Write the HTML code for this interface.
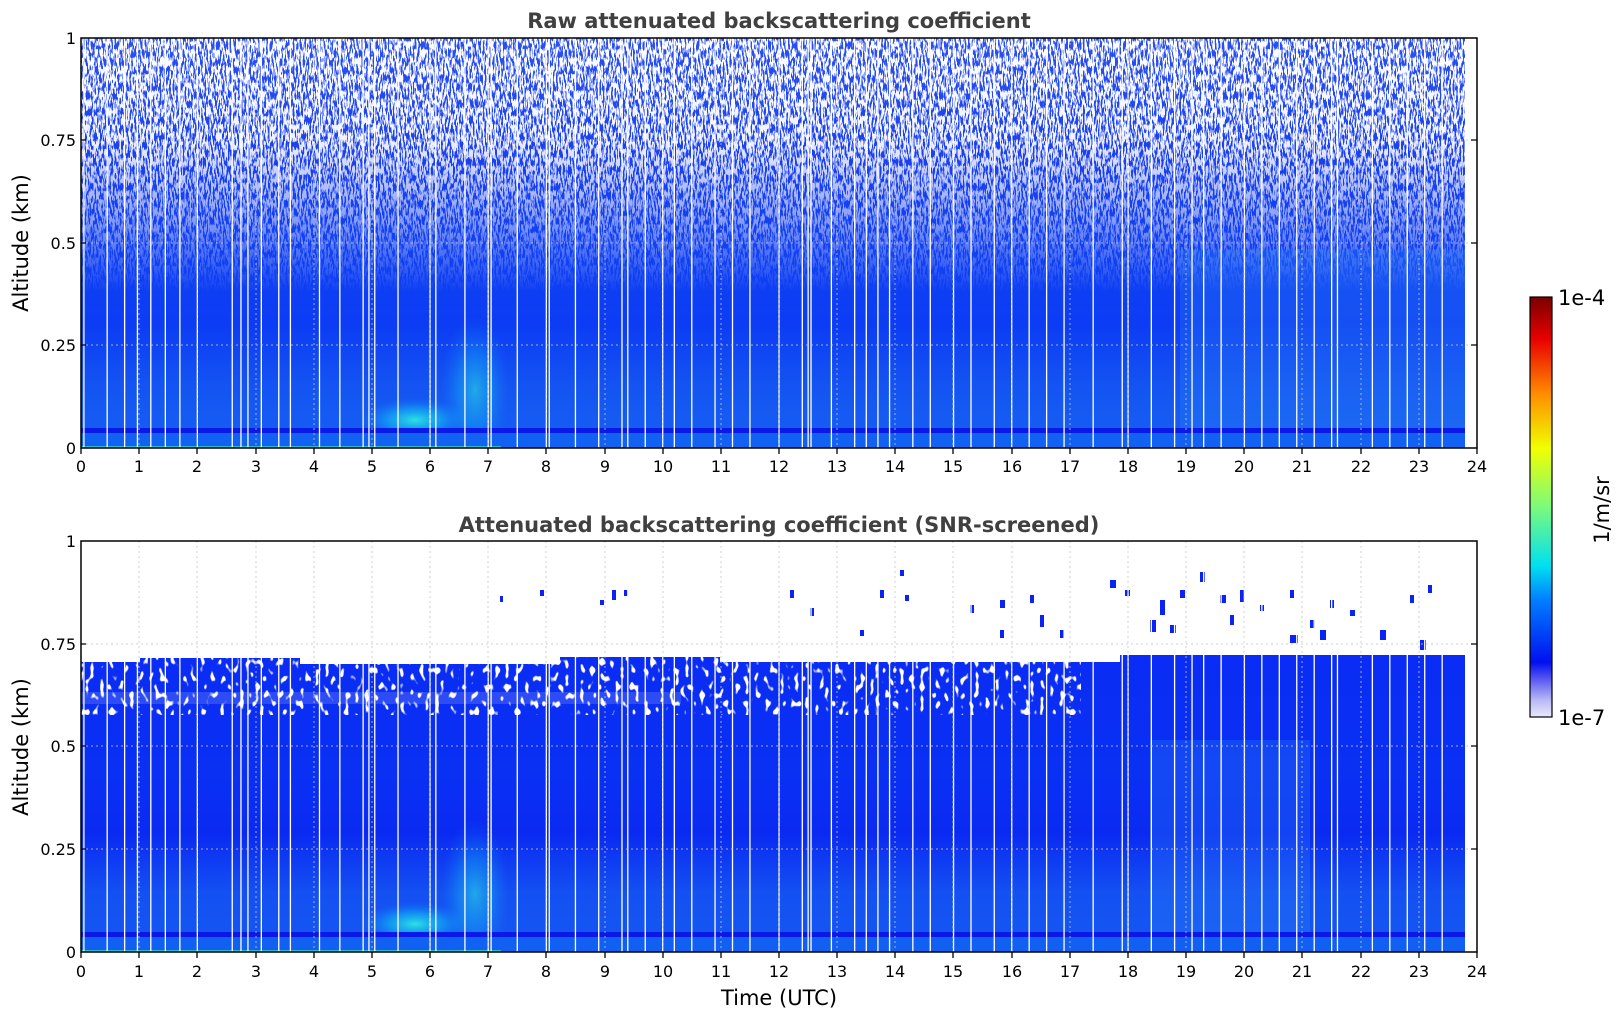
<!DOCTYPE html>
<html><head><meta charset="utf-8"><style>
html,body{margin:0;padding:0;background:#fff;}
svg{display:block;}
text{font-family:"DejaVu Sans","Liberation Sans",sans-serif;}
</style></head><body>
<svg width="1621" height="1020" viewBox="0 0 1621 1020" xmlns="http://www.w3.org/2000/svg">
<defs>
<clipPath id="c1"><rect x="81" y="38" width="1384" height="410"/></clipPath>
<clipPath id="c2"><rect x="81" y="541" width="1384" height="411"/></clipPath>
<linearGradient id="gTop" x1="0" y1="0" x2="0" y2="1">
<stop offset="0" stop-color="#2a50f0"/>
<stop offset="0.3" stop-color="#1a40f0"/>
<stop offset="0.55" stop-color="#1040f2"/>
<stop offset="0.7" stop-color="#0c3cf4"/>
<stop offset="0.85" stop-color="#1454f2"/>
<stop offset="1" stop-color="#1660f2"/>
</linearGradient>
<linearGradient id="gBot" x1="0" y1="0" x2="0" y2="1">
<stop offset="0" stop-color="#0a2cf4"/>
<stop offset="0.4" stop-color="#0a30f4"/>
<stop offset="0.6" stop-color="#0a2af2"/>
<stop offset="0.8" stop-color="#1450f2"/>
<stop offset="1" stop-color="#1458f2"/>
</linearGradient>
<linearGradient id="mTop" x1="0" y1="0" x2="0" y2="1">
<stop offset="0" stop-color="#fff"/>
<stop offset="0.25" stop-color="#eee"/>
<stop offset="0.45" stop-color="#777"/>
<stop offset="0.62" stop-color="#000"/>
</linearGradient>
<mask id="mk"><rect x="81" y="38" width="1384" height="410" fill="url(#mTop)"/></mask>
<filter id="nz" x="0" y="0" width="100%" height="100%">
<feTurbulence type="fractalNoise" baseFrequency="0.6 0.12" numOctaves="2" seed="7"/>
<feColorMatrix type="matrix" values="0 0 0 0 1  0 0 0 0 1  0 0 0 0 1  14 0 0 0 -6.3"/>
</filter>
<filter id="nz2" x="0" y="0" width="100%" height="100%">
<feTurbulence type="fractalNoise" baseFrequency="0.2 0.12" numOctaves="1" seed="3"/>
<feColorMatrix type="matrix" values="0 0 0 0 1  0 0 0 0 1  0 0 0 0 1  12 0 0 0 -7"/>
</filter>
<radialGradient id="cy" cx="0.5" cy="0.5" r="0.5">
<stop offset="0" stop-color="#2ef0e0" stop-opacity="0.9"/>
<stop offset="0.5" stop-color="#12c0f4" stop-opacity="0.55"/>
<stop offset="1" stop-color="#1080f4" stop-opacity="0"/>
</radialGradient>
<linearGradient id="jet" x1="0" y1="1" x2="0" y2="0">
<stop offset="0" stop-color="#eaeafb"/>
<stop offset="0.04" stop-color="#b8b8f6"/>
<stop offset="0.09" stop-color="#5858f2"/>
<stop offset="0.13" stop-color="#0010f0"/>
<stop offset="0.28" stop-color="#0080ff"/>
<stop offset="0.36" stop-color="#00e0f0"/>
<stop offset="0.5" stop-color="#7cfa7c"/>
<stop offset="0.64" stop-color="#f0ff00"/>
<stop offset="0.77" stop-color="#ff8c00"/>
<stop offset="0.9" stop-color="#e80000"/>
<stop offset="1" stop-color="#7a0000"/>
</linearGradient>
<g id="vlines">
<path transform="translate(81,0) scale(58.17,1)" vector-effect="non-scaling-stroke" stroke="#fff" stroke-width="1.3" fill="none"
d="M.05 0V1M.45 0V1M.75 0V1M.97 0V1M1.2 0V1M1.45 0V1M1.7 0V1M2 0V1M2.6 0V1M2.75 0V1M2.87 0V1M3.1 0V1M3.4 0V1M3.6 0V1M4.1 0V1M4.45 0V1M4.85 0V1M4.95 0V1M5.05 0V1M5.45 0V1M6 0V1M6.1 0V1M6.6 0V1M7 0V1M7.05 0V1M7.5 0V1M8 0V1M8.05 0V1M8.5 0V1M8.9 0V1M9.3 0V1M9.4 0V1M9.7 0V1M10 0V1M10.2 0V1M10.5 0V1M10.9 0V1M11.2 0V1M11.5 0V1M12 0V1M12.4 0V1M12.5 0V1M12.55 0V1M12.9 0V1M13.3 0V1M13.5 0V1M13.7 0V1M13.9 0V1M14.3 0V1M14.6 0V1M15 0V1M15.3 0V1M15.7 0V1M16 0V1M16.3 0V1M16.6 0V1M16.9 0V1M17.4 0V1M17.9 0V1M18 0V1M18.4 0V1M18.8 0V1M19.1 0V1M19.3 0V1M19.6 0V1M20 0V1M20.3 0V1M20.6 0V1M20.9 0V1M21.2 0V1M21.5 0V1M21.6 0V1M22.2 0V1M22.5 0V1M22.8 0V1M23.1 0V1M23.4 0V1"/>
</g>
</defs>

<!-- TOP PANEL -->
<g clip-path="url(#c1)">
<rect x="81" y="38" width="1384" height="410" fill="url(#gTop)"/>
<rect x="81" y="38" width="1384" height="410" filter="url(#nz)" mask="url(#mk)"/>
<rect x="1180" y="250" width="285" height="180" fill="#2a80f4" opacity="0.3"/>
<ellipse cx="415" cy="420" rx="55" ry="22" fill="url(#cy)"/>
<ellipse cx="475" cy="390" rx="35" ry="75" fill="url(#cy)" opacity="0.6"/>
<rect x="81" y="428" width="1384" height="5" fill="#0a18e8"/>
<rect x="81" y="433" width="1384" height="15" fill="#1062f2" opacity="0.85"/>
<rect x="81" y="446" width="420" height="2" fill="#30e0c0" opacity="0.7"/>
<g transform="translate(0,38) scale(1,410)"><use href="#vlines"/></g>
</g>

<!-- BOTTOM PANEL -->
<g clip-path="url(#c2)">
<path d="M81 662 H140 V658 H300 V664 H560 V657 H720 V662 H1120 V655 H1465 V952 H81Z" fill="url(#gBot)"/>
<rect x="81" y="655" width="1000" height="60" filter="url(#nz2)"/>
<rect x="81" y="692" width="600" height="12" fill="#fff" opacity="0.15"/>
<rect x="1150" y="740" width="160" height="200" fill="#2a80f4" opacity="0.3"/>
<ellipse cx="415" cy="924" rx="55" ry="22" fill="url(#cy)"/>
<ellipse cx="475" cy="894" rx="35" ry="75" fill="url(#cy)" opacity="0.6"/>
<rect x="81" y="932" width="1384" height="5" fill="#0a18e8"/>
<rect x="81" y="937" width="1384" height="15" fill="#1062f2" opacity="0.85"/>
<rect x="81" y="950" width="420" height="2" fill="#30e0c0" opacity="0.7"/>
<g fill="#0a22f4">
<rect x="500" y="596" width="3" height="6"/><rect x="540" y="590" width="4" height="6"/><rect x="600" y="600" width="4" height="5"/><rect x="612" y="590" width="4" height="10"/><rect x="624" y="590" width="4" height="6"/><rect x="880" y="590" width="4" height="8"/><rect x="900" y="570" width="4" height="6"/><rect x="905" y="595" width="4" height="6"/><rect x="1000" y="600" width="5" height="8"/><rect x="1030" y="595" width="4" height="8"/><rect x="1110" y="580" width="6" height="8"/><rect x="1125" y="590" width="5" height="6"/><rect x="1160" y="600" width="5" height="15"/><rect x="1180" y="590" width="5" height="8"/><rect x="1200" y="572" width="5" height="10"/><rect x="1220" y="595" width="6" height="8"/><rect x="1240" y="590" width="5" height="12"/><rect x="1260" y="605" width="4" height="6"/><rect x="1290" y="590" width="4" height="8"/><rect x="1310" y="620" width="5" height="8"/><rect x="1330" y="600" width="4" height="8"/><rect x="1350" y="610" width="5" height="6"/><rect x="1410" y="595" width="4" height="8"/><rect x="1428" y="585" width="4" height="8"/><rect x="1150" y="620" width="6" height="12"/><rect x="1170" y="625" width="6" height="8"/><rect x="1230" y="615" width="4" height="10"/><rect x="1290" y="635" width="8" height="8"/><rect x="1320" y="630" width="6" height="10"/><rect x="1380" y="630" width="6" height="10"/><rect x="1420" y="640" width="6" height="10"/><rect x="1000" y="630" width="4" height="8"/><rect x="1040" y="615" width="4" height="12"/><rect x="1060" y="630" width="4" height="8"/><rect x="970" y="605" width="4" height="8"/><rect x="790" y="590" width="4" height="8"/><rect x="810" y="608" width="4" height="8"/><rect x="860" y="630" width="4" height="6"/>
</g>
<g transform="translate(0,541) scale(1,411)"><use href="#vlines"/></g>
</g>

<!-- grids -->
<g stroke="#c8c8c8" stroke-width="1" stroke-dasharray="2,3" opacity="0.8">
<path d="M139 38V448M197 38V448M256 38V448M314 38V448M372 38V448M430 38V448M488 38V448M546 38V448M605 38V448M663 38V448M721 38V448M779 38V448M837 38V448M895 38V448M953 38V448M1012 38V448M1070 38V448M1128 38V448M1186 38V448M1244 38V448M1302 38V448M1361 38V448M1419 38V448M81 140H1477M81 243H1477M81 345H1477"/>
<path d="M139 541V952M197 541V952M256 541V952M314 541V952M372 541V952M430 541V952M488 541V952M546 541V952M605 541V952M663 541V952M721 541V952M779 541V952M837 541V952M895 541V952M953 541V952M1012 541V952M1070 541V952M1128 541V952M1186 541V952M1244 541V952M1302 541V952M1361 541V952M1419 541V952M81 644H1477M81 746H1477M81 849H1477"/>
</g>

<!-- axes frames -->
<rect x="81" y="38" width="1396" height="410" fill="none" stroke="#000" stroke-width="1.5"/>
<rect x="81" y="541" width="1396" height="411" fill="none" stroke="#000" stroke-width="1.5"/>
<g stroke="#000" stroke-width="1.3">
<path d="M81 448v6M139 448v6M197 448v6M256 448v6M314 448v6M372 448v6M430 448v6M488 448v6M546 448v6M605 448v6M663 448v6M721 448v6M779 448v6M837 448v6M895 448v6M953 448v6M1012 448v6M1070 448v6M1128 448v6M1186 448v6M1244 448v6M1302 448v6M1361 448v6M1419 448v6M1477 448v6"/>
<path d="M81 952v6M139 952v6M197 952v6M256 952v6M314 952v6M372 952v6M430 952v6M488 952v6M546 952v6M605 952v6M663 952v6M721 952v6M779 952v6M837 952v6M895 952v6M953 952v6M1012 952v6M1070 952v6M1128 952v6M1186 952v6M1244 952v6M1302 952v6M1361 952v6M1419 952v6M1477 952v6"/>
<path d="M81 140h5M81 243h5M81 345h5M1477 140h-6M1477 243h-6M1477 345h-6M81 644h5M81 746h5M81 849h5M1477 644h-6M1477 746h-6M1477 849h-6"/>
</g>

<!-- tick labels -->
<g font-size="16" fill="#000" text-anchor="middle">
<text x="81" y="472">0</text><text x="139" y="472">1</text><text x="197" y="472">2</text><text x="256" y="472">3</text><text x="314" y="472">4</text><text x="372" y="472">5</text><text x="430" y="472">6</text><text x="488" y="472">7</text><text x="546" y="472">8</text><text x="605" y="472">9</text><text x="663" y="472">10</text><text x="721" y="472">11</text><text x="779" y="472">12</text><text x="837" y="472">13</text><text x="895" y="472">14</text><text x="953" y="472">15</text><text x="1012" y="472">16</text><text x="1070" y="472">17</text><text x="1128" y="472">18</text><text x="1186" y="472">19</text><text x="1244" y="472">20</text><text x="1302" y="472">21</text><text x="1361" y="472">22</text><text x="1419" y="472">23</text><text x="1477" y="472">24</text>
<text x="81" y="977">0</text><text x="139" y="977">1</text><text x="197" y="977">2</text><text x="256" y="977">3</text><text x="314" y="977">4</text><text x="372" y="977">5</text><text x="430" y="977">6</text><text x="488" y="977">7</text><text x="546" y="977">8</text><text x="605" y="977">9</text><text x="663" y="977">10</text><text x="721" y="977">11</text><text x="779" y="977">12</text><text x="837" y="977">13</text><text x="895" y="977">14</text><text x="953" y="977">15</text><text x="1012" y="977">16</text><text x="1070" y="977">17</text><text x="1128" y="977">18</text><text x="1186" y="977">19</text><text x="1244" y="977">20</text><text x="1302" y="977">21</text><text x="1361" y="977">22</text><text x="1419" y="977">23</text><text x="1477" y="977">24</text>
</g>
<g font-size="16" fill="#000" text-anchor="end">
<text x="76" y="44">1</text><text x="76" y="146">0.75</text><text x="76" y="249">0.5</text><text x="76" y="351">0.25</text><text x="76" y="454">0</text>
<text x="76" y="547">1</text><text x="76" y="650">0.75</text><text x="76" y="752">0.5</text><text x="76" y="855">0.25</text><text x="76" y="958">0</text>
</g>
<text x="779" y="28" font-size="21" font-weight="bold" fill="#404040" text-anchor="middle">Raw attenuated backscattering coefficient</text>
<text x="779" y="532" font-size="21" font-weight="bold" fill="#404040" text-anchor="middle">Attenuated backscattering coefficient (SNR-screened)</text>
<text transform="translate(28,243) rotate(-90)" font-size="21" text-anchor="middle">Altitude (km)</text>
<text transform="translate(28,747) rotate(-90)" font-size="21" text-anchor="middle">Altitude (km)</text>
<text x="779" y="1005" font-size="21" text-anchor="middle">Time (UTC)</text>

<!-- colorbar -->
<rect x="1530" y="297" width="22" height="420" fill="url(#jet)" stroke="#000" stroke-width="1.2"/>
<text x="1558" y="305" font-size="21">1e-4</text>
<text x="1558" y="725" font-size="21">1e-7</text>
<text transform="translate(1609,510) rotate(-90)" font-size="21" text-anchor="middle">1/m/sr</text>
</svg>
</body></html>
